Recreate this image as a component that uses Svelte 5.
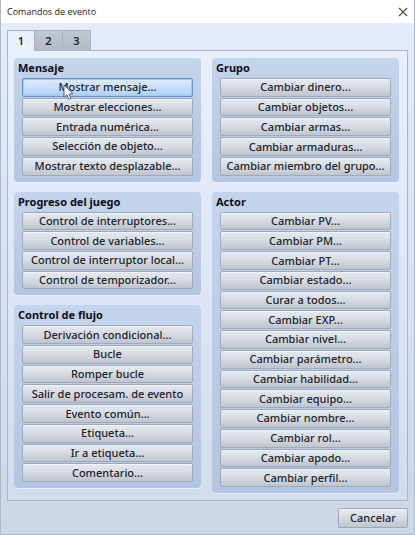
<script>
  const columns = [
    [
      {
        title: 'Mensaje',
        commands: [
          'Mostrar mensaje...',
          'Mostrar elecciones...',
          'Entrada numérica...',
          'Selección de objeto...',
          'Mostrar texto desplazable...'
        ]
      },
      {
        title: 'Progreso del juego',
        commands: [
          'Control de interruptores...',
          'Control de variables...',
          'Control de interruptor local...',
          'Control de temporizador...'
        ]
      },
      {
        title: 'Control de flujo',
        commands: [
          'Derivación condicional...',
          'Bucle',
          'Romper bucle',
          'Salir de procesam. de evento',
          'Evento común...',
          'Etiqueta...',
          'Ir a etiqueta...',
          'Comentario...'
        ]
      }
    ],
    [
      {
        title: 'Grupo',
        commands: [
          'Cambiar dinero...',
          'Cambiar objetos...',
          'Cambiar armas...',
          'Cambiar armaduras...',
          'Cambiar miembro del grupo...'
        ]
      },
      {
        title: 'Actor',
        commands: [
          'Cambiar PV...',
          'Cambiar PM...',
          'Cambiar PT...',
          'Cambiar estado...',
          'Curar a todos...',
          'Cambiar EXP...',
          'Cambiar nivel...',
          'Cambiar parámetro...',
          'Cambiar habilidad...',
          'Cambiar equipo...',
          'Cambiar nombre...',
          'Cambiar rol...',
          'Cambiar apodo...',
          'Cambiar perfil...'
        ]
      }
    ]
  ];

  let tab = $state(1);
  let selected = $state('Mostrar mensaje...');
</script>

<div class="window">
  <header>
    <h1>Comandos de evento</h1>
    <button class="close" aria-label="Cerrar">
      <svg width="10" height="10" viewBox="0 0 10 10" aria-hidden="true">
        <path d="M1 1l8 8M9 1l-8 8" stroke="#555" stroke-width="1.2" fill="none" />
      </svg>
    </button>
  </header>

  <div class="body">
    <div class="tabs" role="tablist">
      {#each [1, 2, 3] as n}
        <button role="tab" class="tab" class:active={tab === n} aria-selected={tab === n} onclick={() => (tab = n)}>{n}</button>
      {/each}
    </div>

    <main>
      {#each columns as groups}
        <div class="column">
          {#each groups as group}
            <section style:flex-grow={group.commands.length}>
              <h2>{group.title}</h2>
              <div class="list">
                {#each group.commands as command}
                  <button class="command" class:selected={selected === command} onclick={() => (selected = command)}>{command}</button>
                {/each}
              </div>
            </section>
          {/each}
        </div>
      {/each}
    </main>

    <footer>
      <button class="command cancel">Cancelar</button>
    </footer>
  </div>

  <svg class="cursor" width="11" height="17" viewBox="0 0 11 17" aria-hidden="true">
    <path d="M1 1v12.4l2.9-2.7 1.9 4.6 2.1-.9-1.9-4.4h3.9z" fill="#fff" stroke="#4a5568" stroke-width="0.9" />
  </svg>
</div>

<style>
  :global(body) {
    margin: 0;
  }

  .window {
    position: relative;
    display: flex;
    flex-direction: column;
    box-sizing: border-box;
    min-height: 100vh;
    border: 1px solid #aeb8c6;
    border-top: 0;
    font-family: 'Noto Sans', 'Open Sans', sans-serif;
    font-size: 11px;
    color: #20242b;
  }

  button {
    margin: 0;
    padding: 0;
    font: inherit;
    color: inherit;
  }

  header {
    display: flex;
    align-items: center;
    justify-content: space-between;
    height: 23px;
    padding: 0 6px;
    background: #fff;
  }

  h1 {
    margin: 0;
    font-family: 'Open Sans', sans-serif;
    font-size: 9px;
    font-weight: 400;
    color: #222;
  }

  .close {
    display: flex;
    border: 0;
    background: none;
  }

  .body {
    flex: 1;
    display: flex;
    flex-direction: column;
    padding: 7px 6px 6px;
    background: linear-gradient(#e2ecfe, #ccd7e5);
  }

  .tabs {
    display: flex;
    align-items: flex-end;
    height: 20px;
  }

  .tab {
    width: 28px;
    height: 20px;
    border: 1px solid #a9b1be;
    border-left-width: 0;
    border-bottom: 0;
    background: linear-gradient(#c2c8d2, #b4bac5);
    font-weight: 600;
    line-height: 18px;
  }

  .tab:first-child {
    border-left-width: 1px;
  }

  .tab.active {
    position: relative;
    height: 21px;
    margin-bottom: -1px;
    background: #e8f0fe;
  }

  main {
    flex: 1;
    display: flex;
    gap: 11px;
    padding: 7px 8px 7px 6px;
    border: 1px solid #a9b4c5;
    background: linear-gradient(#e8f0fe, #d2ddeb);
  }

  .column {
    flex: 1 1 0;
    min-width: 0;
    display: flex;
    flex-direction: column;
    gap: 10px;
  }

  .column:first-child {
    padding-bottom: 5px;
  }

  section {
    display: flex;
    flex-direction: column;
    padding: 0 8px 6px;
    border-radius: 4px;
    background: linear-gradient(#c4d4ec, #b3c5e0);
    box-shadow: 0 1px #e6eef9;
  }

  h2 {
    margin: 0 -4px;
    font-size: 11px;
    font-weight: 700;
    line-height: 20px;
    color: #0c0f14;
  }

  .list {
    flex: 1;
    display: grid;
    grid-auto-rows: 1fr;
    gap: 1px;
  }

  .command {
    min-height: 18px;
    border: 1px solid #a0a9b9;
    border-radius: 2px;
    background: linear-gradient(#e6eaf0, #d6dae2 50%, #bfc4ce);
    box-shadow: inset 0 1px #f0f3f8;
    font-weight: 500;
    line-height: 16px;
    white-space: nowrap;
  }

  .command.selected {
    border-color: #6a90bf;
    background: linear-gradient(#dcebfd, #c8e0fa 50%, #abcff5);
    box-shadow: inset 0 0 0 1px #a3caf2;
  }

  footer {
    display: flex;
    justify-content: flex-end;
    padding-top: 7px;
  }

  .cancel {
    width: 70px;
    height: 20px;
  }

  .cursor {
    position: absolute;
    left: 62px;
    top: 84px;
    pointer-events: none;
  }
</style>
